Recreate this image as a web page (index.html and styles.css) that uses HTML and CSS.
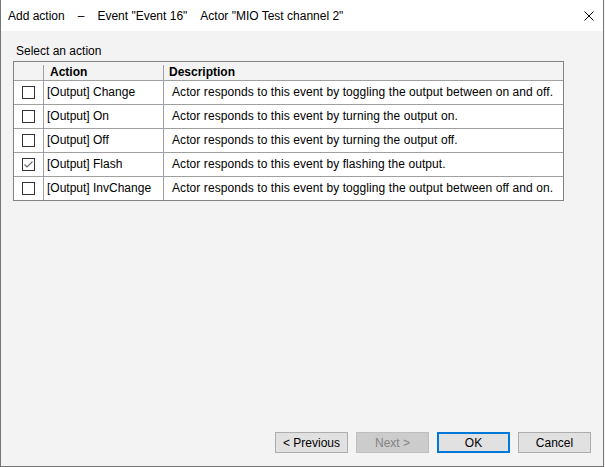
FILE: index.html
```html
<!DOCTYPE html>
<html lang="en">
<head>
<meta charset="utf-8">
<title>Add action</title>
<link rel="stylesheet" href="styles.css">
</head>
<body>
<div class="window">
  <div class="titlebar">
    <span>Add action</span>
    <span>–</span>
    <span>Event "Event 16"</span>
    <span>Actor "MIO Test channel 2"</span>
    <svg class="close" width="10" height="10" viewBox="0 0 10 10"><path d="M0.5 0.5 L9.5 9.5 M9.5 0.5 L0.5 9.5" stroke="#000" stroke-width="1" fill="none"/></svg>
  </div>
  <div class="content">
    <div class="label">Select an action</div>
    <div class="grid">
      <div class="row head">
        <div class="cell"></div>
        <div class="cell hcell hcell-action">Action</div>
        <div class="cell hcell hcell-desc">Description</div>
      </div>
      <div class="row item">
        <div class="cell"><span class="cb"></span></div>
        <div class="cell name">[Output] Change</div>
        <div class="cell desc">Actor responds to this event by toggling the output between on and off.</div>
      </div>
      <div class="row item">
        <div class="cell"><span class="cb"></span></div>
        <div class="cell name">[Output] On</div>
        <div class="cell desc">Actor responds to this event by turning the output on.</div>
      </div>
      <div class="row item">
        <div class="cell"><span class="cb"></span></div>
        <div class="cell name">[Output] Off</div>
        <div class="cell desc">Actor responds to this event by turning the output off.</div>
      </div>
      <div class="row item">
        <div class="cell"><span class="cb checked"><svg width="11" height="11" viewBox="0 0 11 11"><polyline points="1.5,5.5 4,8 9.5,2.5" fill="none" stroke="#6a6a6a" stroke-width="1.1"/></svg></span></div>
        <div class="cell name">[Output] Flash</div>
        <div class="cell desc">Actor responds to this event by flashing the output.</div>
      </div>
      <div class="row item">
        <div class="cell"><span class="cb"></span></div>
        <div class="cell name">[Output] InvChange</div>
        <div class="cell desc">Actor responds to this event by toggling the output between off and on.</div>
      </div>
    </div>
    <div class="footer">
      <button class="btn">&lt; Previous</button>
      <button class="btn" disabled>Next &gt;</button>
      <button class="btn primary">OK</button>
      <button class="btn">Cancel</button>
    </div>
  </div>
</div>
</body>
</html>
```
FILE: styles.css
```css
html, body {
  margin: 0;
  padding: 0;
  background: #f3f3f3;
}
body {
  font-family: "Liberation Sans", Arial, sans-serif;
  font-size: 12px;
  color: #000;
}
.window {
  width: 602px;
  height: 466px;
  border: 1px solid #767676;
  border-top: 0;
  background: #f3f3f3;
  display: flex;
  flex-direction: column;
}
.titlebar {
  height: 31px;
  flex: none;
  background: #fff;
  display: flex;
  align-items: center;
  gap: 13px;
  padding-left: 7px;
  line-height: 16px;
}
.close {
  margin-left: auto;
  margin-right: 9px;
  display: block;
}
.content {
  flex: 1;
  display: flex;
  flex-direction: column;
  padding: 0 12px 13px 12px;
}
.label {
  margin: 12px 0 0 3px;
  line-height: 16px;
}
.grid {
  width: 551px;
  box-sizing: border-box;
  border: 1px solid #828282;
  margin-top: 2px;
  background: #fff;
}
.row {
  display: grid;
  grid-template-columns: 29px 120px 400px;
}
.head {
  height: 18px;
  background: #f3f3f3;
}
.hcell {
  margin-top: 3px;
  line-height: 15px;
  border-left: 1px solid #a0a0a0;
  font-weight: bold;
}
.hcell-action { padding-left: 6px; }
.hcell-desc { padding-left: 5px; }
.item {
  height: 24px;
  box-sizing: border-box;
  border-top: 1px solid #a0a0a0;
}
.item .cell {
  line-height: 23px;
  white-space: nowrap;
}
.name {
  border-left: 1px solid #a0a0a0;
  padding-left: 3px;
}
.desc {
  border-left: 1px solid #a0a0a0;
  padding-left: 8px;
  letter-spacing: 0.08px;
}
.cb {
  display: block;
  width: 13px;
  height: 13px;
  box-sizing: border-box;
  border: 1px solid #333;
  background: #fff;
  margin: 5px 0 0 8px;
}
.cb svg {
  display: block;
}
.footer {
  margin-top: auto;
  display: flex;
  justify-content: flex-end;
  gap: 8px;
}
.btn {
  width: 73px;
  height: 21px;
  box-sizing: border-box;
  padding: 0;
  margin: 0;
  border: 1px solid #adadad;
  background: #e1e1e1;
  font-family: inherit;
  font-size: 12px;
  color: #000;
}
.btn.primary {
  border: 2px solid #0078d7;
}
.btn:disabled {
  background: #cccccc;
  border-color: #bfbfbf;
  color: #838383;
}
```
